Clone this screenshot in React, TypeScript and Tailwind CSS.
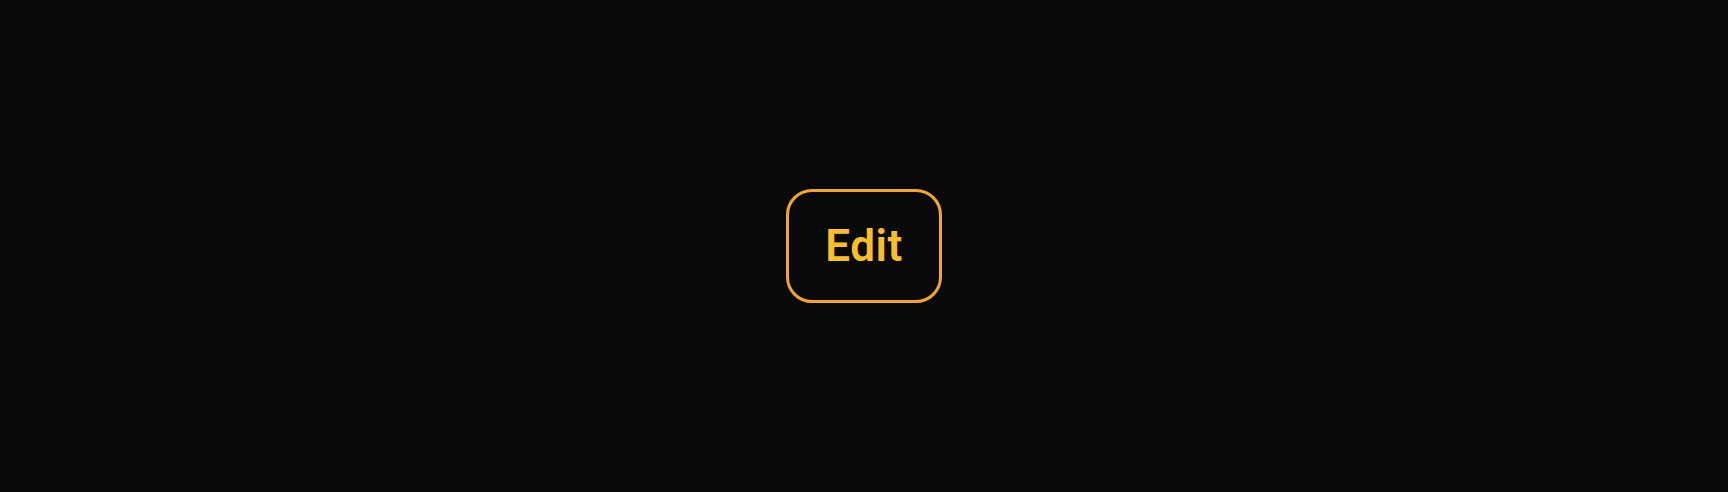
export default function App() {
  return (
    <div className="flex h-[492px] w-full items-center justify-center bg-[#08090b]" style={{ fontFamily: 'Roboto, "Noto Sans", sans-serif' }}>
      <button className="flex h-[114px] w-[156px] items-center justify-center rounded-[26px] border-[3px] border-[#f5a623] bg-transparent text-[44px] font-semibold leading-none tracking-[0.5px] text-[#fbbf24]">
        Edit
      </button>
    </div>
  );
}
